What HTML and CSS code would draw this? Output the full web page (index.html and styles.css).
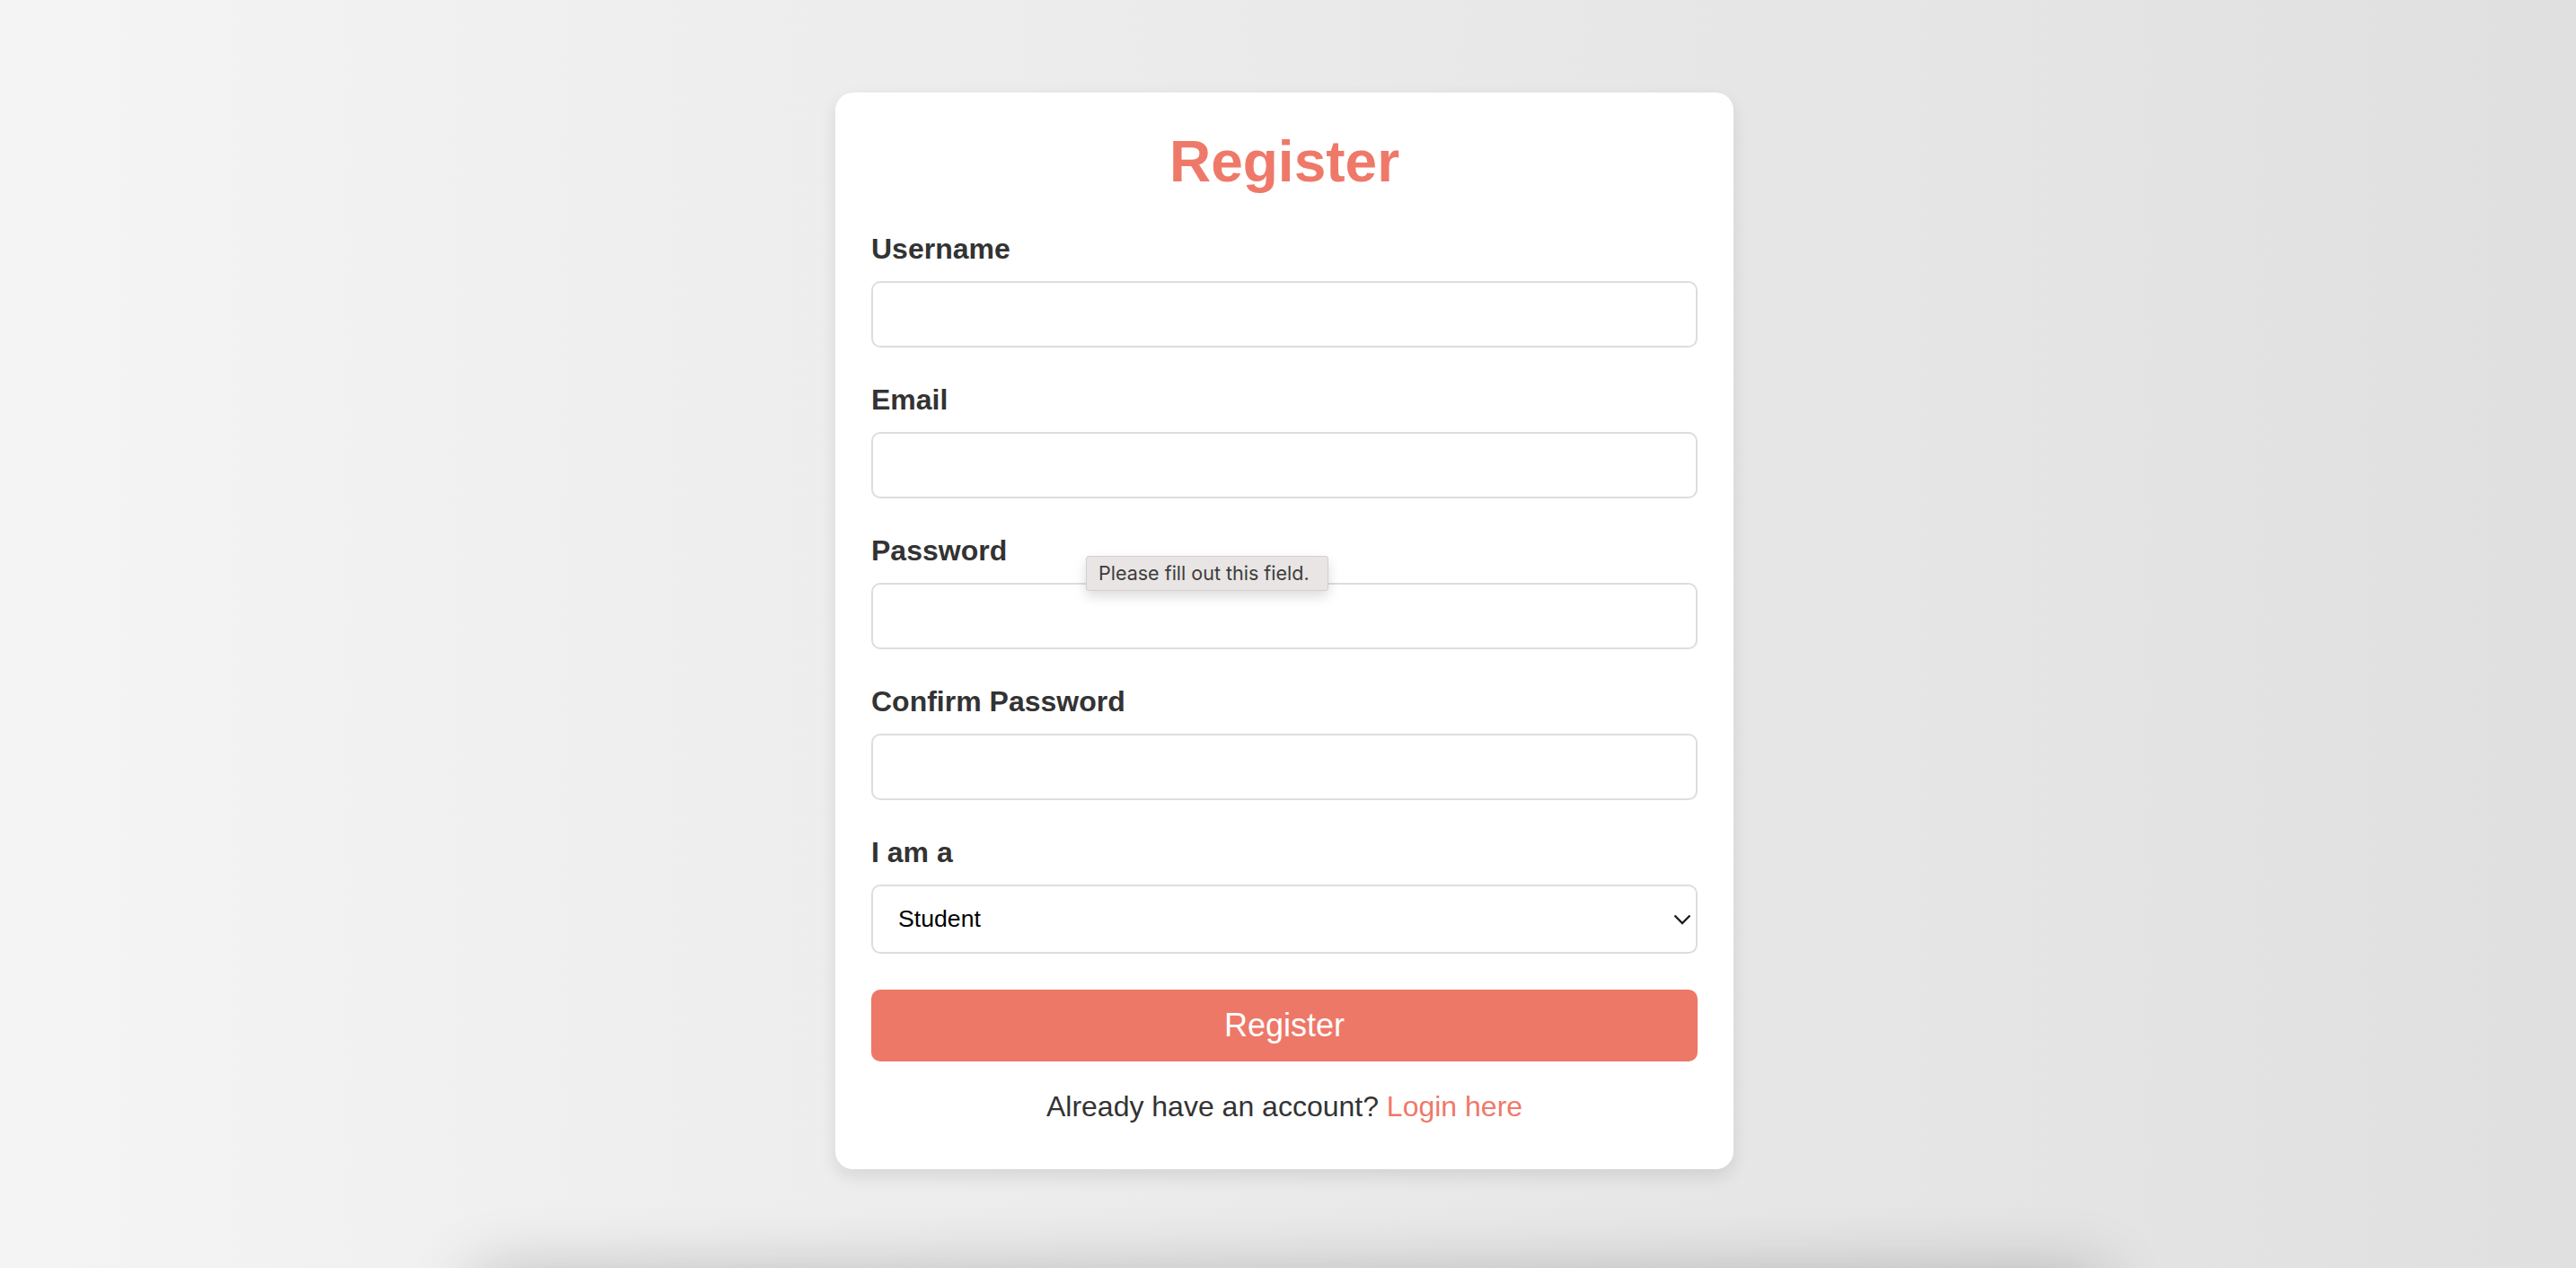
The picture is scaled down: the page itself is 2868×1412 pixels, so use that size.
FILE: index.html
```html
<!DOCTYPE html>
<html lang="en">
<head>
<meta charset="utf-8">
<title>Register</title>
<link rel="stylesheet" href="styles.css">
</head>
<body>
<div class="page">
  <div class="card">
    <h2 class="title">Register</h2>
    <form class="form">
      <div class="field">
        <label class="label" for="username">Username</label>
        <input class="input" id="username" type="text">
      </div>
      <div class="field">
        <label class="label" for="email">Email</label>
        <input class="input" id="email" type="email">
      </div>
      <div class="field field-tip">
        <label class="label" for="password">Password</label>
        <input class="input" id="password" type="password">
        <div class="tooltip">Please fill out this field.</div>
      </div>
      <div class="field">
        <label class="label" for="confirm">Confirm Password</label>
        <input class="input" id="confirm" type="password">
      </div>
      <div class="field">
        <label class="label" for="role">I am a</label>
        <div class="select-wrap">
          <select class="select" id="role">
            <option>Student</option>
            <option>Teacher</option>
          </select>
          <svg class="chevron" width="20" height="12" viewBox="0 0 20 12"><path d="M1.5 1.5 L10 10 L18.5 1.5" fill="none" stroke="#1e1e1e" stroke-width="2.4"/></svg>
        </div>
      </div>
      <button class="button" type="button">Register</button>
    </form>
    <p class="footer-text">Already have an account? <a class="link" href="#">Login here</a></p>
  </div>
  <div class="floor"></div>
</div>
</body>
</html>
```
FILE: styles.css
```css
* { box-sizing: border-box; }
html, body { margin: 0; padding: 0; }
body {
  font-family: "Liberation Sans", Arial, Helvetica, sans-serif;
  background: linear-gradient(to right, #f4f4f4, #e0e0e0);
  overflow: hidden;
}
.page {
  position: relative;
  height: 100vh;
  overflow: hidden;
  display: flex;
  justify-content: center;
  align-items: flex-start;
  padding-top: 103px;
  padding-right: 8px;
}
.card {
  width: 1000px;
  background: #ffffff;
  border-radius: 20px;
  padding: 41px 40px 52px;
  box-shadow: 0 8px 20px rgba(0, 0, 0, 0.1);
  position: relative;
  z-index: 1;
}
.title {
  margin: 0 0 41px;
  text-align: center;
  font-size: 64px;
  font-weight: 700;
  line-height: 73.6px;
  color: #ef7969;
}
.form { margin: 0; }
.field {
  margin-bottom: 40px;
}
.field-tip { position: relative; }
.label {
  display: block;
  font-size: 32px;
  font-weight: 700;
  line-height: 37px;
  color: #333333;
  margin-bottom: 17px;
}
.input, .select {
  display: block;
  width: 100%;
  height: 74px;
  border: 2px solid #dddddd;
  border-radius: 10px;
  background: #ffffff;
  font-family: "Liberation Sans", Arial, sans-serif;
  font-size: 26.67px;
  padding: 0 20px;
  margin: 0;
  outline: none;
}
.select-wrap { position: relative; }
.select {
  height: 77px;
  -webkit-appearance: none;
  appearance: none;
  color: #000000;
  padding-left: 28px;
}
.chevron {
  position: absolute;
  right: 7px;
  top: 33px;
  width: 20px;
  height: 12px;
  pointer-events: none;
}
.tooltip {
  position: absolute;
  left: 239px;
  top: 24px;
  width: 270px;
  height: 39px;
  background: #e8e5e4;
  border: 1px solid #d2cfce;
  border-radius: 3px;
  box-shadow: 0 6px 14px rgba(0, 0, 0, 0.14);
  font-family: Inter, "Noto Sans", sans-serif;
  font-size: 21.5px;
  line-height: 37px;
  color: #3d3d3d;
  padding-left: 13px;
  white-space: nowrap;
}
.button {
  display: block;
  width: 100%;
  height: 80px;
  border: none;
  border-radius: 10px;
  background: #ed7868;
  color: #ffffff;
  font-family: "Liberation Sans", Arial, sans-serif;
  font-size: 36px;
  padding: 0;
  margin: 0;
}
.footer-text {
  margin: 32px 0 0;
  text-align: center;
  font-size: 32px;
  line-height: 36.8px;
  color: #333333;
}
.link {
  color: #ef7969;
  text-decoration: none;
}
.floor {
  position: absolute;
  left: 550px;
  width: 1770px;
  top: 1440px;
  height: 200px;
  background: #d0d0d0;
  box-shadow: 0 0 70px 20px rgba(0, 0, 0, 0.24);
}
```
